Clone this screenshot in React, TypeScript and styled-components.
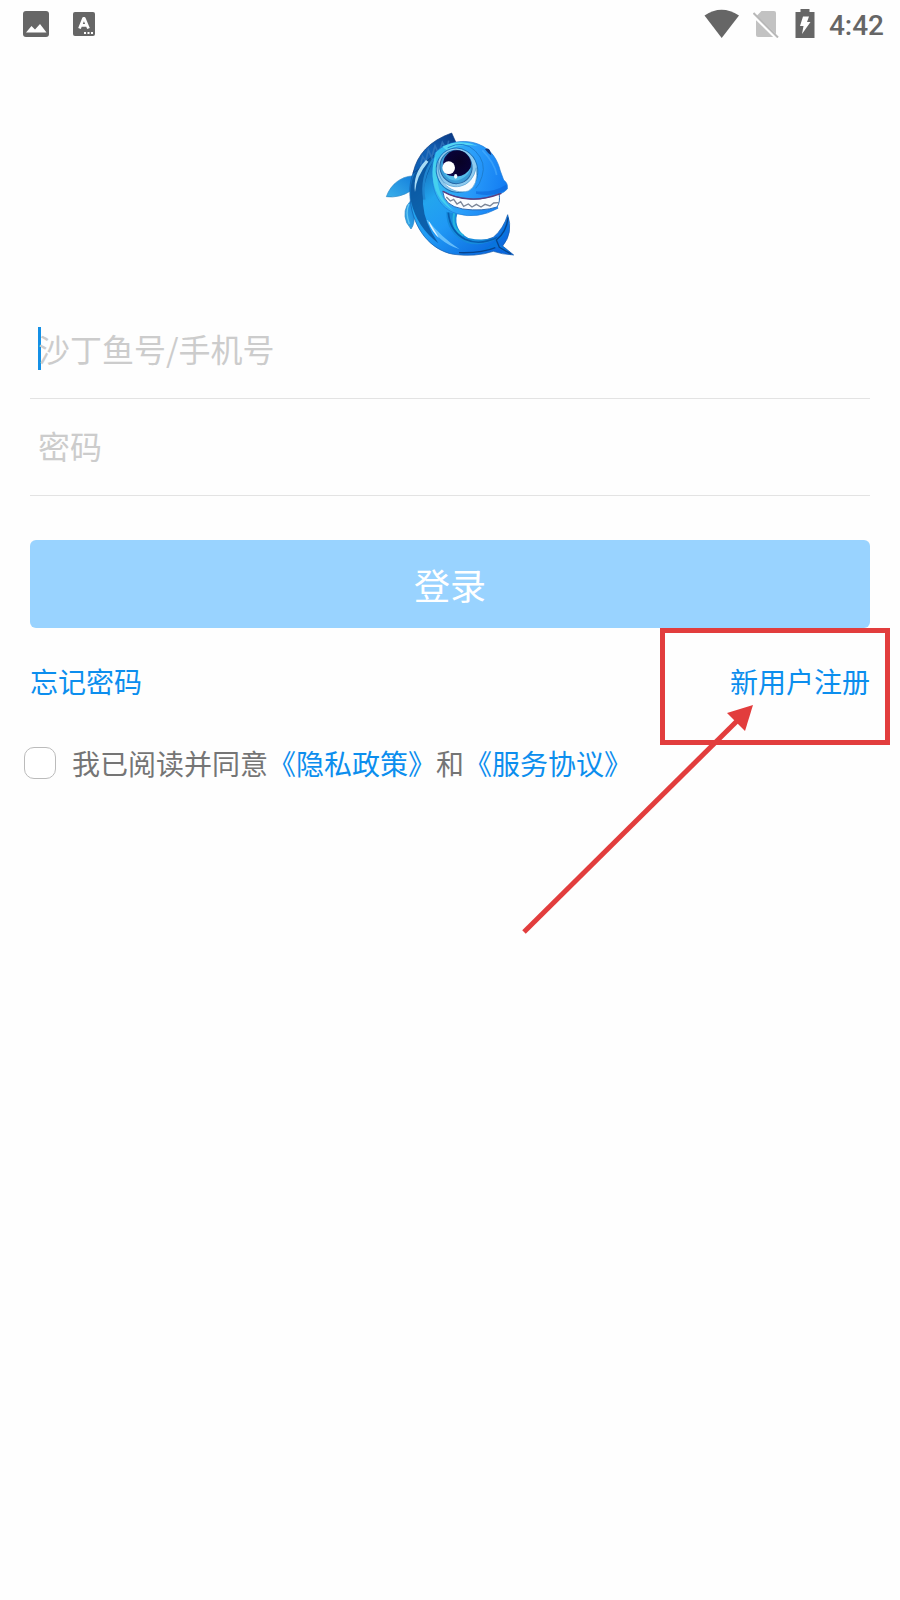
import React from "react";
import styled, { createGlobalStyle } from "styled-components";

const GlobalStyle = createGlobalStyle`
  *, *::before { box-sizing: border-box; }
  body {
    margin: 0;
    background: #fefefe;
    font-family: "Noto Sans CJK SC", sans-serif;
    font-size: 28px;
    line-height: 40px;
    color: #757575;
  }
`;

const Page = styled.div`
  overflow-x: hidden;
  min-height: 100vh;
`;

const StatusBar = styled.header`
  display: flex;
  align-items: center;
  justify-content: space-between;
  height: 48px;
  padding: 0 16px 0 22px;
  color: #666;
`;

const StatusGroup = styled.div<{ $gap: number }>`
  display: flex;
  align-items: center;
  gap: ${(p) => p.$gap}px;
  svg { display: block; }
`;

const Clock = styled.time`
  padding-top: 4px;
  font-family: Roboto, sans-serif;
  font-weight: 500;
`;

const Brand = styled.div`
  display: flex;
  justify-content: center;
  padding: 72px 0 32px;
  svg { display: block; }
`;

const Form = styled.form`
  display: flex;
  flex-direction: column;
  padding: 0 30px;
`;

const Field = styled.label<{ $active?: boolean }>`
  position: relative;
  display: block;
  height: 97px;
  border-bottom: 1px solid #e3e3e3;
  &::before {
    content: "";
    display: ${(p) => (p.$active ? "block" : "none")};
    position: absolute;
    left: 8px;
    top: 25px;
    width: 3px;
    height: 43px;
    background: #1490e6;
  }
`;

const TextInput = styled.input`
  position: relative;
  display: block;
  width: 100%;
  height: 96px;
  padding: 0 8px 4px;
  border: 0;
  outline: 0;
  background: transparent;
  color: #333;
  caret-color: #1490e6;
  font: inherit;
  font-size: 32px;
  &::placeholder { color: #ccc; opacity: 1; }
`;

const LoginButton = styled.button`
  height: 88px;
  margin-top: 44px;
  border: 0;
  border-radius: 6px;
  background: #99d3ff;
  color: #fff;
  font: inherit;
  font-size: 36px;
`;

const LinkRow = styled.nav`
  position: relative;
  display: flex;
  justify-content: space-between;
  margin-top: 33px;
`;

const TextLink = styled.a`
  color: #0c8eee;
  text-decoration: none;
`;

const Highlight = styled.div`
  position: absolute;
  top: -33px;
  right: -20px;
  width: 230px;
  height: 117px;
  border: 5px solid #e23d3d;
  pointer-events: none;
`;

const Arrow = styled.svg`
  position: absolute;
  top: 39px;
  right: 110px;
  pointer-events: none;
`;

const Agreement = styled.div`
  display: flex;
  align-items: center;
  gap: 16px;
  margin: 42px -6px 0;
`;

const CheckBox = styled.input`
  appearance: none;
  flex: none;
  width: 32px;
  height: 32px;
  margin: 0;
  border: 1px solid #bbb;
  border-radius: 10px;
  background: #fff;
`;

const ImageIcon = () => (
  <svg width="28" height="28" viewBox="0 0 28 28" aria-hidden="true">
    <rect x="1" y="1" width="26" height="26" rx="3" fill="#666" />
    <path d="M4 22.500 9.500 16l3.500 3.500L18 14l6.500 8.500z" fill="#fefefe" />
  </svg>
);

const KeyboardIcon = () => (
  <svg width="24" height="26" viewBox="0 0 24 26" aria-hidden="true">
    <rect x="1" y="1" width="22" height="24" rx="2" fill="#666" />
    <path d="M7.500 17.500 11.500 7.500h.8L16.500 17.500M9 14.300h6" fill="none" stroke="#fefefe" strokeWidth="2.800" strokeLinejoin="round" />
    <path d="M12 21h2v2h-2zM15.500 21h2v2h-2zM19 21h2v2h-2z" fill="#fefefe" />
  </svg>
);

const WifiIcon = () => (
  <svg width="36" height="30" viewBox="0 0 36 30" aria-hidden="true">
    <path d="M1.500 6.500Q18.500-5 36 6.500L18.700 29z" fill="#666" />
  </svg>
);

const NoSimIcon = () => (
  <svg width="28" height="28" viewBox="0 0 28 28" aria-hidden="true">
    <path d="M8.500 1h12.500Q23 1 23 3v22q0 2-2 2H5Q3 27 3 25V6.500z" fill="#c2c2c2" />
    <path d="M-1 3.500 24.500 28.500" stroke="#fefefe" strokeWidth="4" />
    <path d="M.5 3 25 27.500" stroke="#b8b8b8" strokeWidth="2" />
  </svg>
);

const BatteryIcon = () => (
  <svg width="20" height="30" viewBox="0 0 20 30" aria-hidden="true">
    <path d="M5.500 0h9v3H19.500v26H.5V3h5z" fill="#666" />
    <path d="M8 7.500h6L12 13h3.500L7 25 8.500 17H5z" fill="#fefefe" />
  </svg>
);

const FishLogo = () => (
  <svg width="150" height="150" viewBox="0 0 450 450" role="img" aria-label="沙丁鱼">
    <defs>
      <linearGradient id="body" x1="0.1" y1="0.1" x2="0.8" y2="1">
        <stop offset="0" stopColor="#126bb8" />
        <stop offset="0.3" stopColor="#23a5ee" />
        <stop offset="0.55" stopColor="#2099f5" />
        <stop offset="1" stopColor="#0a66dd" />
      </linearGradient>
      <linearGradient id="head" x1="0" y1="0.4" x2="1" y2="0.6">
        <stop offset="0" stopColor="#35bfee" />
        <stop offset="0.5" stopColor="#2a9dfa" />
        <stop offset="1" stopColor="#127bf2" />
      </linearGradient>
      <linearGradient id="fin" x1="0" y1="1" x2="1" y2="0">
        <stop offset="0" stopColor="#0d5fb4" />
        <stop offset="0.5" stopColor="#1260b5" />
        <stop offset="1" stopColor="#0a357f" />
      </linearGradient>
      <linearGradient id="sideFin" x1="0" y1="1" x2="1" y2="0">
        <stop offset="0" stopColor="#3bb0ea" />
        <stop offset="1" stopColor="#1480dc" />
      </linearGradient>
      <radialGradient id="pupil" cx="0.6" cy="0.4" r="0.6">
        <stop offset="0" stopColor="#080225" />
        <stop offset="0.75" stopColor="#090337" />
        <stop offset="1" stopColor="#10105c" />
      </radialGradient>
    </defs>
    <path d="M112 168C82 169 48 190 34 230Q72 235 107 213z" fill="url(#sideFin)" stroke="#2a86c4" strokeWidth="2" />
    <path d="M107 242Q80 270 95 308l13 19q13-16 9-54z" fill="url(#sideFin)" stroke="#2a86c4" strokeWidth="2" />
    <path d="M102 252Q90 276 103 312" fill="none" stroke="#62c6f3" strokeWidth="4" />
    <path d="M180 98C121 115 98 172 106 242C115 326 166 390 235 403Q301 412 355 394Q380 403 416 405Q398 390 383 378Q416 338 398 284Q386 325 355 352Q316 369 276 357C235 340 232 309 247 280L305 175z" fill="url(#body)" stroke="#1257a8" strokeWidth="2" />
    <path d="M173 107C122 133 100 184 108 244Q125 321 190 370Q148 310 144 252Q140 184 183 107z" fill="#07509a" opacity=".8" />
    <path d="M114 160Q132 74 230 39L244 70Q184 88 138 142z" fill="url(#fin)" stroke="#0b3a7d" strokeWidth="2" />
    <path d="M137 134l6-24 9 14 8-34 10 23 10-36 11 25 11-35 13 22 6-27" fill="none" stroke="#3577bd" strokeWidth="5" opacity=".75" />
    <path d="M153 120Q112 162 120 216Q124 168 160 125z" fill="#a9dcf5" />
    <path d="M176 116Q136 171 148 239" fill="none" stroke="#1f84cf" strokeWidth="7" />
    <path d="M155 301Q186 367 254 388Q200 353 158 300z" fill="#7dcfff" opacity=".75" />
    <path d="M161 306Q171 336 192 354Q178 330 163 305z" fill="#e4f6ff" />
    <path d="M214 275Q213 340 274 368Q322 383 374 352Q323 364 280 354Q236 330 246 282z" fill="#168bdc" />
    <path d="M220 278Q225 334 270 358Q313 378 369 352" fill="none" stroke="#075cae" strokeWidth="5" />
    <path d="M238 278Q227 325 265 346" fill="none" stroke="#25b5df" strokeWidth="6" />
    <path d="M399 288Q407 341 366 369Q387 379 407 401Q379 393 365 380Q333 396 304 399Q350 378 363 356Q388 330 399 288z" fill="#0874dd" />
    <path d="M399 293Q395 336 364 360L373 382 408 402M361 383Q321 400 252 398" fill="none" stroke="#06438d" strokeWidth="4" />
    <path d="M181 98C210 66 267 55 311 73C348 87 368 119 376 153Q382 169 386 180Q400 190 397 207Q380 226 342 229Q364 245 369 265Q307 299 245 281C175 261 158 174 181 98z" fill="url(#head)" stroke="#1b78d4" strokeWidth="2" />
    <path d="M181 108C161 170 178 239 236 272Q184 229 187 160z" fill="#45d1ee" />
    <path d="M202 80Q256 55 309 78Q261 68 215 91z" fill="#55d6f3" />
    <path d="M218 83Q267 59 301 93Q335 128 321 169Q314 195 302 205" fill="none" stroke="#1d7ed0" strokeWidth="3" />
    <ellipse cx="246" cy="151" rx="62" ry="67" transform="rotate(-16 246 151)" fill="#8ecbef" stroke="#1b73bd" strokeWidth="3" />
    <path d="M190 125C184 178 215 206 255 199Q293 191 304 143Q311 196 280 213C235 226 181 188 190 125z" fill="#f8fcff" stroke="#4e9bd0" strokeWidth="2" />
    <ellipse cx="243" cy="141" rx="48" ry="50" transform="rotate(-18 243 141)" fill="#3a9cd7" stroke="#2466a5" strokeWidth="3" />
    <ellipse cx="246" cy="133" rx="42" ry="42" fill="url(#pupil)" />
    <path d="M206 160Q228 192 259 177Q284 165 288 142Q270 172 242 169Q218 169 206 160z" fill="#55bce9" />
    <circle cx="221" cy="143" r="19" fill="#fff" />
    <ellipse cx="242" cy="169" rx="5" ry="7" fill="#eafaff" />
    <path d="M330 88Q345 78 349 106Q343 104 330 88z" fill="#12377b" />
    <path d="M203 213Q206 257 263 267Q323 275 366 261Q377 245 372 220Q330 240 287 237Q237 234 203 213z" fill="#fafdff" stroke="#2c6bb4" strokeWidth="3" />
    <path d="M204 214Q237 234 287 237Q330 239 379 220" fill="none" stroke="#5c3d80" strokeWidth="4" />
    <path d="M214 231l12 12 10-5 10 14 11-7 9 14 14-7 11 9 13-8 14 8 12-8 15 5 11-9 15-1" fill="none" stroke="#7a8597" strokeWidth="4" />
    <path d="M303 214Q353 219 393 194Q399 201 392 210Q355 232 303 221z" fill="#0e68db" opacity=".65" />
    <path d="M322 91Q359 128 365 165" fill="none" stroke="#58b7ff" strokeWidth="5" opacity=".45" />
  </svg>
);

export default function App() {
  return (
    <Page>
      <GlobalStyle />
      <StatusBar>
        <StatusGroup $gap={22}>
          <ImageIcon />
          <KeyboardIcon />
        </StatusGroup>
        <StatusGroup $gap={14}>
          <WifiIcon />
          <NoSimIcon />
          <BatteryIcon />
          <Clock>4:42</Clock>
        </StatusGroup>
      </StatusBar>
      <main>
        <Brand>
          <FishLogo />
        </Brand>
        <Form onSubmit={(e) => e.preventDefault()}>
          <Field $active>
            <TextInput type="text" aria-label="沙丁鱼号/手机号" placeholder="沙丁鱼号/手机号" />
          </Field>
          <Field>
            <TextInput type="password" aria-label="密码" placeholder="密码" />
          </Field>
          <LoginButton type="submit">登录</LoginButton>
          <LinkRow>
            <TextLink href="#forgot">忘记密码</TextLink>
            <TextLink href="#register">新用户注册</TextLink>
            <Highlight />
            <Arrow width="240" height="240" viewBox="0 0 240 240" aria-hidden="true">
              <path d="M4 232 218 20" stroke="#e23d3d" strokeWidth="5" />
              <path d="M233 5 207 13l18 18z" fill="#e23d3d" />
            </Arrow>
          </LinkRow>
          <Agreement>
            <CheckBox type="checkbox" id="agree" />
            <label htmlFor="agree">
              我已阅读并同意<TextLink href="#privacy">《隐私政策》</TextLink>和<TextLink href="#terms">《服务协议》</TextLink>
            </label>
          </Agreement>
        </Form>
      </main>
    </Page>
  );
}
